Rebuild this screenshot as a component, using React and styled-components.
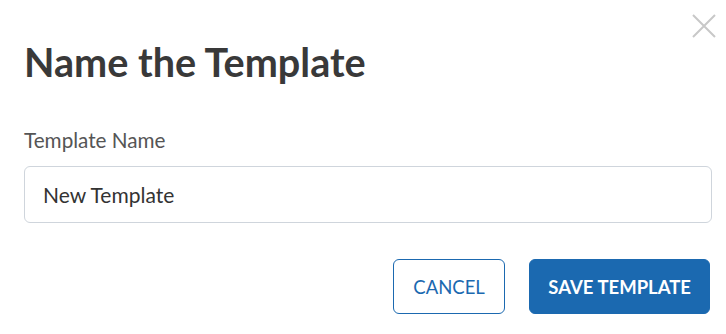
import styled, { createGlobalStyle } from "styled-components";

const GlobalStyle = createGlobalStyle`
  body {
    margin: 0;
    background: #fff;
    font-family: Lato, "Open Sans", sans-serif;
  }
`;

const Dialog = styled.div`
  position: relative;
  width: 726px;
  height: 334px;
  box-sizing: border-box;
  padding: 38px 14px 0 24px;
  background: #fff;
`;

const Close = styled.button`
  position: absolute;
  top: 13px;
  right: 9px;
  width: 26px;
  height: 26px;
  padding: 0;
  border: none;
  background: none;
  cursor: pointer;
`;

const Title = styled.h1`
  margin: 0;
  font-size: 39.6px;
  font-weight: 700;
  line-height: 48px;
  color: #393939;
`;

const Label = styled.label`
  display: block;
  margin-top: 41px;
  font-size: 20.7px;
  line-height: 26px;
  color: #555;
`;

const Input = styled.input`
  display: block;
  box-sizing: border-box;
  width: 100%;
  height: 57px;
  margin-top: 13px;
  padding: 0 18px;
  border: 1px solid #cfd5dc;
  border-radius: 6px;
  font-family: inherit;
  font-size: 21px;
  color: #333;
  outline: none;
`;

const Actions = styled.div`
  display: flex;
  justify-content: flex-end;
  gap: 24px;
  margin-top: 36px;
  padding-right: 2px;
`;

const Button = styled.button`
  height: 55px;
  padding: 0 ${({ $primary }) => ($primary ? "18px" : "19.5px")};
  border-radius: 6px;
  border: 1px solid #1b69b0;
  background: ${({ $primary }) => ($primary ? "#1b69b0" : "#fff")};
  color: ${({ $primary }) => ($primary ? "#fff" : "#1b69b0")};
  font-family: inherit;
  font-size: 18.5px;
  font-weight: ${({ $primary }) => ($primary ? 700 : 400)};
  cursor: pointer;
`;

export default function App() {
  return (
    <>
      <GlobalStyle />
      <Dialog>
        <Close aria-label="Close">
          <svg width="26" height="26" viewBox="0 0 26 26">
            <path d="M2 2 L24 24 M24 2 L2 24" stroke="#c8c8c8" strokeWidth="2" />
          </svg>
        </Close>
        <Title>Name the Template</Title>
        <Label>Template Name</Label>
        <Input defaultValue="New Template" />
        <Actions>
          <Button>CANCEL</Button>
          <Button $primary>SAVE TEMPLATE</Button>
        </Actions>
      </Dialog>
    </>
  );
}
